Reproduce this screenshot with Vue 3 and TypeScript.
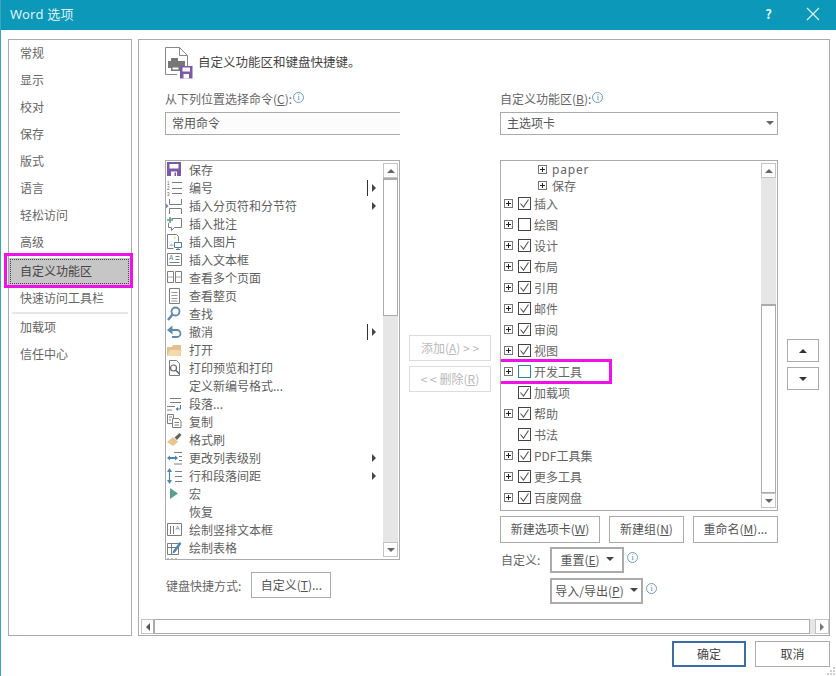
<script setup lang="ts">
type Shape = { d?: string; f?: string; s?: string; w?: number; t?: string; x?: number; y?: number; z?: number }

const purple = '#7c58a8'
const blue = '#5b8ab3'
const grey = '#7d7d7d'
const tan = '#e8c48e'
const green = '#5b9f8d'

const icons: Record<string, Shape[]> = {
  save: [
    { d: 'M1 0h14v14H1z', f: purple },
    { d: 'M3.500 2h9v4.500h-9z', f: '#fff' },
    { d: 'M5 9.500h6V14H5z', f: '#fff' },
    { d: 'M8.500 10.500h1.500V14H8.500z', f: purple }
  ],
  numbering: [
    { t: '1', x: 1, y: 4.500, z: 4.500, f: '#556' },
    { t: '2', x: 1, y: 10, z: 4.500, f: '#556' },
    { t: '3', x: 1, y: 15.500, z: 4.500, f: '#556' },
    { d: 'M6 2.500h10M6 8.500h10M6 13.500h10', s: grey }
  ],
  breaks: [
    { d: 'M3.500 1v5.500h12V1M3.500 16v-5.500h12V16', s: grey, f: 'none' },
    { d: 'M0 5.500l2.500 2.500L0 10.500z', f: blue }
  ],
  comment: [
    { d: 'M5.500 2.500h10v9H8.500l-3 3v-3h-3V7', s: grey, f: 'none' },
    { d: 'M1 4h6M4 1v6', s: green, w: 1.600 }
  ],
  picture: [
    { d: 'M1.500 14.500v-14h9l2 2v5M7.500 14.500h-6', s: grey, f: 'none' },
    { d: 'M3 12l2.500-3 2.500 3z', f: '#b5cfe2' },
    { d: 'M8.500 8.500h7v5h-7zM12 13.500v2M10 15.500h4', s: '#4d7f9f', f: '#fff' },
    { d: 'M8 3h1.500v1.500H8z', f: tan }
  ],
  textbox: [
    { d: 'M1.500 1.500h14v12h-14z', s: grey, f: '#fff' },
    { t: 'A', x: 3, y: 8, z: 6.500, f: '#4a7a9f' },
    { d: 'M9.500 4.500h4M9.500 7.500h4M3.500 10.500h10', s: grey }
  ],
  pages: [
    { d: 'M1.500 1.500h6v11h-6zM9.500 1.500h6v11h-6z', s: grey, f: 'none' },
    { d: 'M1.500 7h6M9.500 7h6', s: '#aaa' }
  ],
  page: [
    { d: 'M3.500 .5h10v15h-10z', s: grey, f: 'none' },
    { d: 'M5.500 4.500h6M5.500 7.500h6M5.500 10.500h6M5.500 13h6', s: '#999' }
  ],
  find: [
    { d: 'M9.500 1.500a4 4 0 1 1 0 8a4 4 0 0 1 0-8z', s: blue, w: 1.800, f: 'none' },
    { d: 'M6.500 8.500L2 14', s: blue, w: 2.400 }
  ],
  undo: [
    { d: 'M3 6h8a3.500 3.500 0 0 1 0 7H6', s: blue, w: 1.800, f: 'none' },
    { d: 'M6.500 1.500v9L1 6z', f: blue }
  ],
  open: [
    { d: 'M1 5h5l1-2h8v11H1z', f: '#e2c08f' },
    { d: 'M1 14l3-6h12l-2 6z', f: '#f3d9ae' }
  ],
  preview: [
    { d: 'M3.500 15.500V.5h7l3 3v12z', s: grey, f: 'none' },
    { d: 'M7.500 5a3 3 0 1 1 0 6a3 3 0 0 1 0-6z', s: '#666', w: 1.200, f: '#fff' },
    { d: 'M10 10.500l3.500 3.500', s: '#666', w: 1.600 }
  ],
  para: [
    { d: 'M4 2.500h11M4 6.500h11M1 10.500h8M1 14h5', s: grey, f: 'none' },
    { d: 'M14.500 9v4h-3', s: '#4d7f9f', f: 'none' },
    { d: 'M12 11l-2.500 2 2.500 2z', f: '#4d7f9f' }
  ],
  copy: [
    { d: 'M1.500 .5h6v9h-6z', s: grey, f: '#fff' },
    { d: 'M6.500 4.500h6l2.500 2.500v6.500H6.500z', s: grey, f: '#fff' },
    { d: 'M8.500 8.500h4.500M8.500 11h4.500M3 3h3M3 6h2', s: grey }
  ],
  painter: [
    { d: 'M1 10l6-5 5 5-5 4z', f: tan },
    { d: 'M8.500 5.500l5-4.500 2 2-4.500 5z', f: '#666' }
  ],
  level: [
    { d: 'M1 8l3-2.500V7h5V5.500L12 8 9 10.500V9H4v1.500z', f: '#4a86b8' },
    { d: 'M8 2.500h8M13 6.500h3M13 10.500h3M8 14h8', s: grey }
  ],
  spacing: [
    { d: 'M3.500 4v8', s: '#4a86b8', w: 1.200 },
    { d: 'M3.500 0L1 4h5zM3.500 16L1 12h5z', f: '#4a86b8' },
    { d: 'M9 3.500h7M9 8.500h7M9 13.500h7', s: grey }
  ],
  macro: [{ d: 'M4 2l8 5.500-8 5.500z', f: green }],
  vertical: [
    { d: 'M1.500 1.500h14v12h-14z', s: grey, f: '#fff' },
    { d: 'M4.500 4v8M7.500 4v8', s: grey },
    { t: 'A', x: 9.500, y: 8, z: 6, f: '#4a7a9f' }
  ],
  table: [
    { d: 'M1.500 3.500h11v11h-11zM1.500 7.500h11M5.500 3.500v11', s: grey, f: 'none' },
    { d: 'M7 11l6.500-9 2 1.500-6.500 9-2.500 1z', f: '#4a86b8' }
  ],
  tail: [{ d: 'M2 0v3M6 0v3M10 0v3', s: grey }]
}

const leftRows = [
  { icon: 'save', text: '保存' },
  { icon: 'numbering', text: '编号', sub: 'line' },
  { icon: 'breaks', text: '插入分页符和分节符', sub: 'arrow' },
  { icon: 'comment', text: '插入批注' },
  { icon: 'picture', text: '插入图片' },
  { icon: 'textbox', text: '插入文本框' },
  { icon: 'pages', text: '查看多个页面' },
  { icon: 'page', text: '查看整页' },
  { icon: 'find', text: '查找' },
  { icon: 'undo', text: '撤消', sub: 'line' },
  { icon: 'open', text: '打开' },
  { icon: 'preview', text: '打印预览和打印' },
  { icon: '', text: '定义新编号格式...' },
  { icon: 'para', text: '段落...' },
  { icon: 'copy', text: '复制' },
  { icon: 'painter', text: '格式刷' },
  { icon: 'level', text: '更改列表级别', sub: 'arrow' },
  { icon: 'spacing', text: '行和段落间距', sub: 'arrow' },
  { icon: 'macro', text: '宏' },
  { icon: '', text: '恢复' },
  { icon: 'vertical', text: '绘制竖排文本框' },
  { icon: 'table', text: '绘制表格' },
  { icon: 'tail', text: '' }
]

const tabs = [
  { text: '插入', plus: true, on: true },
  { text: '绘图', plus: true, on: false },
  { text: '设计', plus: true, on: true },
  { text: '布局', plus: true, on: true },
  { text: '引用', plus: true, on: true },
  { text: '邮件', plus: true, on: true },
  { text: '审阅', plus: true, on: true },
  { text: '视图', plus: true, on: true },
  { text: '开发工具', plus: true, on: false, mark: true },
  { text: '加载项', plus: false, on: true },
  { text: '帮助', plus: true, on: true },
  { text: '书法', plus: false, on: true },
  { text: 'PDF工具集', plus: true, on: true },
  { text: '更多工具', plus: true, on: true },
  { text: '百度网盘', plus: true, on: true }
]

const navTop = ['常规', '显示', '校对', '保存', '版式', '语言', '轻松访问', '高级']
const navAfter = ['加载项', '信任中心']
</script>

<template>
  <div class="window">
    <header class="titlebar">
      <span class="title">Word 选项</span>
      <span class="help">?</span>
      <svg class="close" width="14" height="14" viewBox="0 0 14 14">
        <path d="M1 1l12 12M13 1L1 13" stroke="#e6f6fa" stroke-width="1.100" fill="none" />
      </svg>
    </header>

    <div class="body">
      <nav class="nav">
        <div v-for="n in navTop" :key="n" class="nav-item">{{ n }}</div>
        <div class="nav-item nav-active">
          自定义功能区
          <span class="mark mark-nav"></span>
        </div>
        <div class="nav-item">快速访问工具栏</div>
        <div class="nav-rule"></div>
        <div v-for="n in navAfter" :key="n" class="nav-item">{{ n }}</div>
      </nav>

      <section class="panel">
        <div class="heading">
          <svg width="28" height="32" viewBox="0 0 28 32">
            <path d="M.5.500h14l8 8v11M12 27.500H.5V.500M14.500.500v8h8" stroke="#888" fill="#fff" />
            <path d="M6 11h7v3H6zM3 14h17v7H3zM6 19h9v5H6z" fill="#777" />
            <path d="M7.500 20.500h6v2h-6z" fill="#fff" />
            <path d="M15 19h12.500v12.500H15z" fill="#7c58a8" />
            <path d="M17.500 20.500h7.500v4h-7.500z" fill="#fff" />
            <path d="M18.500 27h5.500v4.500h-5.500z" fill="#fff" />
          </svg>
          <span class="heading-text">自定义功能区和键盘快捷键。</span>
        </div>

        <div class="columns">
          <div class="col-left">
            <div class="label">从下列位置选择命令(<u>C</u>):<i class="info">i</i></div>
            <div class="select select-open">常用命令</div>
            <div class="list list-left">
              <div class="rows">
                <div v-for="(r, i) in leftRows" :key="i" class="cmd">
                  <svg class="cmd-icon" width="16" height="16" viewBox="0 0 16 16">
                    <template v-for="(p, j) in icons[r.icon] || []" :key="j">
                      <text v-if="p.t" :x="p.x" :y="p.y" :font-size="p.z" :fill="p.f" class="svg-t">{{ p.t }}</text>
                      <path v-else :d="p.d" :fill="p.f || 'none'" :stroke="p.s || 'none'" :stroke-width="p.w || 1" />
                    </template>
                  </svg>
                  <span class="cmd-text">{{ r.text }}</span>
                  <span v-if="r.sub" class="sub">
                    <span v-if="r.sub === 'line'" class="sub-line"></span>
                    <span class="sub-arrow"></span>
                  </span>
                </div>
              </div>
              <div class="vbar">
                <div class="vbtn"><span class="tri-up"></span></div>
                <div class="thumb thumb-left"></div>
                <div class="track grow"></div>
                <div class="vbtn"><span class="tri-down"></span></div>
              </div>
            </div>
            <div class="shortcut">
              <span>键盘快捷方式:</span>
              <button class="btn btn-short">自定义(<u>T</u>)...</button>
            </div>
          </div>

          <div class="col-mid">
            <button class="btn btn-off">添加(<u>A</u>)  &gt; &gt;</button>
            <button class="btn btn-off">&lt; &lt;  删除(<u>R</u>)</button>
          </div>

          <div class="col-right">
            <div class="label">自定义功能区(<u>B</u>):<i class="info">i</i></div>
            <div class="select">
              主选项卡
              <span class="tri-down select-tri"></span>
            </div>
            <div class="list list-right">
              <div class="rows">
                <div class="sub-row"><span class="plus"></span><span class="latin">paper</span></div>
                <div class="sub-row"><span class="plus"></span><span>保存</span></div>
                <div v-for="t in tabs" :key="t.text" class="tab">
                  <span :class="['plus', { hidden: !t.plus }]"></span>
                  <span :class="['check', { teal: t.mark }]">
                    <svg v-if="t.on" width="11" height="11" viewBox="0 0 11 11">
                      <path d="M1.500 5.500l3 3.500 5-7.500" stroke="#555" stroke-width="1.100" fill="none" />
                    </svg>
                  </span>
                  <span>{{ t.text }}</span>
                  <span v-if="t.mark" class="mark mark-tab"></span>
                </div>
              </div>
              <div class="vbar">
                <div class="vbtn"><span class="tri-up"></span></div>
                <div class="track track-right"></div>
                <div class="thumb grow"></div>
                <div class="vbtn"><span class="tri-down"></span></div>
              </div>
            </div>
            <div class="tree-btns">
              <button class="btn b-new">新建选项卡(<u>W</u>)</button>
              <button class="btn b-group">新建组(<u>N</u>)</button>
              <button class="btn b-rename">重命名(<u>M</u>)...</button>
            </div>
            <div class="custom-row">
              <span class="custom-label">自定义:</span>
              <button class="btn btn-drop b-reset">重置(<u>E</u>)<span class="tri-down drop-tri"></span></button>
              <i class="info">i</i>
            </div>
            <div class="custom-row custom-second">
              <button class="btn btn-drop b-import">导入/导出(<u>P</u>)<span class="tri-down drop-tri"></span></button>
              <i class="info">i</i>
            </div>
          </div>

          <div class="col-arrows">
            <button class="btn arrow-btn"><span class="tri-up dark"></span></button>
            <button class="btn arrow-btn"><span class="tri-down dark"></span></button>
          </div>
        </div>

        <div class="hbar">
          <div class="hbtn"><span class="tri-left"></span></div>
          <div class="hthumb"></div>
          <div class="hgap"></div>
          <div class="hbtn hbtn-end"><span class="tri-right"></span></div>
        </div>
      </section>
    </div>

    <footer class="footer">
      <button class="btn btn-ok">确定</button>
      <button class="btn btn-cancel">取消</button>
      <svg class="grip" width="8" height="8" viewBox="0 0 8 8">
        <path d="M6 0h2v2H6zM3 3h2v2H3zM6 3h2v2H6zM0 6h2v2H0zM3 6h2v2H3zM6 6h2v2H6z" fill="#cfcfcf" />
      </svg>
    </footer>
  </div>
</template>

<style>
html, body { margin: 0; background: #fff; }
</style>

<style scoped>
.window {
  width: 836px;
  height: 676px;
  box-sizing: border-box;
  display: flex;
  flex-direction: column;
  background: #fff;
  overflow: hidden;
  position: relative;
  font-family: "Noto Sans CJK SC", "Noto Sans", sans-serif;
  font-size: 12px;
  color: #5a5a5a;
  border-left: 1px solid #3aa6b8;
}
.titlebar {
  height: 30px;
  box-sizing: border-box;
  flex: none;
  margin-left: -1px;
  background: #0b98b9;
  color: #dff3f7;
  display: flex;
  align-items: center;
  padding: 0 0 3px 10px;
}
.title { font-size: 13px; font-family: "Noto Sans", "Noto Sans CJK SC", sans-serif; letter-spacing: .2px; }
.help { margin-left: auto; margin-right: 34px; font-size: 13px; font-weight: 600; }
.close { margin-right: 16px; }

.body {
  display: flex;
  gap: 6px;
  padding: 9px 0 0 7px;
  height: 597px;
  flex: none;
}
.nav {
  width: 124px;
  box-sizing: border-box;
  border: 1px solid #ababab;
  flex: none;
}
.nav-item {
  height: 27px;
  line-height: 25px;
  padding-left: 11px;
  position: relative;
  color: #666;
}
.nav-active {
  margin: 2px 1px 0 0;
  background: #c6c6c6;
  color: #444;
  line-height: 26px;
  outline: 1px dotted #444;
  outline-offset: -2px;
}
.nav-rule { height: 2px; margin: 0 3px; background: #e6e6e6; }
.mark {
  position: absolute;
  box-sizing: border-box;
  border: 3px solid #f010e8;
  pointer-events: none;
}
.mark-nav { left: -5px; top: -5px; width: 129px; height: 35px; }
.mark-tab { left: -9px; top: -2px; width: 120px; height: 25px; }

.panel {
  width: 692px;
  box-sizing: border-box;
  border: 1px solid #ababab;
  display: flex;
  flex-direction: column;
  flex: none;
}
.heading {
  display: flex;
  align-items: center;
  gap: 5px;
  margin: 7px 0 0 26px;
  height: 31px;
}
.heading svg { flex: none; }
.heading-text { font-size: 12.500px; color: #444; padding-bottom: 2px; }
.columns { display: flex; padding-left: 26px; margin-top: 14px; }
.col-left { width: 235px; flex: none; }
.col-mid {
  width: 82px;
  flex: none;
  margin: 243px 0 0 9px;
  display: flex;
  flex-direction: column;
  gap: 5px;
}
.col-right { width: 278px; flex: none; margin-left: 9px; }
.col-arrows {
  width: 32px;
  flex: none;
  margin: 247px 0 0 9px;
  display: flex;
  flex-direction: column;
  gap: 5px;
}
.label { height: 14px; line-height: 14px; color: #666; display: flex; align-items: center; white-space: pre; }
.info {
  width: 9px;
  height: 9px;
  border: 1px solid #6a9ec4;
  border-radius: 50%;
  margin: -3px 0 0 1px;
  font: normal 8px/9px "Liberation Serif", serif;
  color: #3f7fb5;
  text-align: center;
  display: inline-block;
  flex: none;
  overflow: hidden;
}
.select {
  height: 23px;
  line-height: 19px;
  margin-top: 6px;
  box-sizing: border-box;
  border: 1px solid #ababab;
  padding-left: 6px;
  color: #555;
  position: relative;
  background: #fff;
}
.select-open { border-right: none; background: #fcfcfc; }
.select-tri { position: absolute; right: 3px; top: 8px; }
.list {
  margin-top: 25px;
  box-sizing: border-box;
  border: 1px solid #ababab;
  display: flex;
  overflow: hidden;
}
.list-left { height: 400px; }
.list-right { height: 351px; }
.rows { flex: 1; min-width: 0; overflow: hidden; }
.cmd { height: 18px; display: flex; align-items: center; white-space: nowrap; color: #5f5f5f; }
.cmd-icon { width: 16px; height: 16px; margin-right: 7px; flex: none; overflow: visible; }
.cmd-text { padding-bottom: 2px; }
.svg-t { font-family: "Liberation Sans", sans-serif; }
.sub {
  margin-left: auto;
  margin-right: 7px;
  width: 10px;
  height: 16px;
  display: flex;
  align-items: center;
  justify-content: flex-end;
  gap: 4px;
}
.sub-line { width: 1px; height: 16px; background: #333; }
.sub-arrow {
  width: 0;
  height: 0;
  border-left: 4px solid #444;
  border-top: 4px solid transparent;
  border-bottom: 4px solid transparent;
}
.vbar {
  width: 15px;
  flex: none;
  margin: 2px 1px 2px 0;
  display: flex;
  flex-direction: column;
  background: #e6e6e6;
}
.vbtn {
  height: 15px;
  box-sizing: border-box;
  border: 1px solid #c4c4c4;
  background: #fff;
  display: flex;
  align-items: center;
  justify-content: center;
  flex: none;
}
.thumb {
  box-sizing: border-box;
  border: 1px solid #ababab;
  border-top-width: 2px;
  background: #fff;
}
.thumb-left { height: 138px; }
.grow { flex: 1; }
.track { background: #e6e6e6; }
.track-right { height: 126px; }
.tri-up, .tri-down {
  display: inline-block;
  width: 0;
  height: 0;
  border-left: 4px solid transparent;
  border-right: 4px solid transparent;
}
.tri-up { border-bottom: 4px solid #666; }
.tri-down { border-top: 4px solid #666; }
.tri-up.dark { border-bottom-color: #333; }
.tri-down.dark { border-top-color: #333; }
.shortcut { margin-top: 12px; display: flex; align-items: center; color: #666; padding-left: 1px; }
.btn {
  box-sizing: border-box;
  height: 26px;
  padding: 0 0 2px;
  border: 1px solid #ababab;
  background: #fff;
  font: inherit;
  color: #555;
  display: flex;
  align-items: center;
  justify-content: center;
  white-space: pre;
}
.btn-short { width: 80px; margin-left: 10px; }
.btn-off { height: 26px; border-color: #dcdcdc; color: #b9b9b9; }
.sub-row {
  height: 16px;
  display: flex;
  align-items: center;
  padding-left: 37px;
  color: #666;
}
.sub-row .plus { margin-right: 5px; }
.latin { font-family: "Noto Sans", sans-serif; font-size: 12px; letter-spacing: .8px; }
.tab { height: 21px; display: flex; align-items: center; padding-left: 3px; position: relative; color: #666; }
.plus {
  width: 9px;
  height: 9px;
  box-sizing: border-box;
  border: 1px solid #777;
  position: relative;
  flex: none;
  background:
    linear-gradient(#222, #222) center / 5px 1px no-repeat,
    linear-gradient(#222, #222) center / 1px 5px no-repeat;
}
.plus.hidden { visibility: hidden; }
.check {
  width: 13px;
  height: 13px;
  box-sizing: border-box;
  border: 1px solid #444;
  margin: 0 3px 0 5px;
  flex: none;
  display: flex;
  align-items: center;
  justify-content: center;
}
.check.teal { border-color: #2b84a3; }
.tree-btns { display: flex; gap: 9px; margin-top: 5px; }
.tree-btns .btn { height: 27px; }
.b-new { width: 100px; }
.b-group { width: 75px; }
.b-rename { width: 85px; }
.custom-row { display: flex; align-items: center; margin-top: 4px; }
.custom-second { margin-top: 5px; padding-left: 50px; }
.custom-label { width: 50px; padding: 0 0 2px 1px; box-sizing: border-box; color: #666; flex: none; }
.btn-drop { border: 2px solid #ababab; flex: none; }
.b-reset { width: 74px; }
.b-import { width: 93px; }
.drop-tri { margin-left: 6px; border-top-color: #444; }
.custom-row .info { margin: -6px 0 0 3px; }
.arrow-btn { width: 32px; height: 23px; padding: 0; }
.hbar {
  margin: auto 0 1px 2px;
  height: 15px;
  display: flex;
  flex: none;
  background: #e6e6e6;
}
.hbtn {
  width: 14px;
  box-sizing: border-box;
  border: 1px solid #c4c4c4;
  border-right: 2px solid #ababab;
  background: #fff;
  display: flex;
  align-items: center;
  justify-content: center;
  flex: none;
}
.hbtn-end { border-right: 1px solid #c4c4c4; }
.hthumb { flex: 1; border: 1px solid #ababab; border-left: none; background: #fff; box-sizing: border-box; }
.hgap { width: 5px; flex: none; }
.tri-left, .tri-right {
  width: 0;
  height: 0;
  border-top: 4px solid transparent;
  border-bottom: 4px solid transparent;
}
.tri-left { border-right: 4px solid #555; }
.tri-right { border-left: 4px solid #777; }
.footer {
  display: flex;
  justify-content: flex-end;
  gap: 9px;
  padding-right: 6px;
  margin-top: 5px;
  position: relative;
}
.btn-ok { width: 74px; border: 2px solid #3a6ea5; color: #444; }
.btn-cancel { width: 75px; color: #444; }
.grip { position: absolute; right: 1px; bottom: -8px; }
</style>
